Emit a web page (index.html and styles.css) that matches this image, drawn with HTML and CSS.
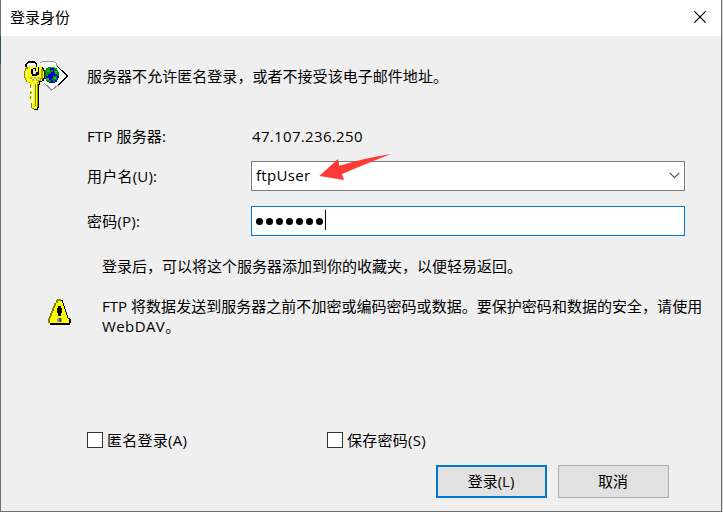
FILE: index.html
```html
<!DOCTYPE html>
<html lang="zh-CN">
<head>
<meta charset="utf-8">
<title>登录身份</title>
<link rel="stylesheet" href="styles.css">
</head>
<body>
<main class="dialog">
  <header class="titlebar">
    <span>登录身份</span>
    <svg class="close" width="12" height="12" viewBox="0 0 12 12"><path d="M.3.3 11.7 11.7M11.7.3.3 11.7" fill="none" stroke="#000" stroke-width="1.15"/></svg>
  </header>
  <section class="intro">
    <svg class="key" width="60" height="60" viewBox="0 0 60 60" shape-rendering="crispEdges">
      <path d="M25 8H39L41 12 51 22 42 31 36 36 28 29Z" fill="#fff"/>
      <path d="M24 8.500H26M26 7.500H38M38 8.500H40M40.500 9V12" fill="none" stroke="#999" stroke-width="1"/>
      <path d="M41.500 12.500 51.500 22 42.500 31" fill="none" stroke="#000" stroke-width="1.100"/>
      <path d="M28.500 29.500 35.500 36 42.500 31" fill="none" stroke="#8c8c8c" stroke-width="1.200"/>
      <path d="M32 13H39V14H41V16H42V18H43V24H42V26H41V28H39V29H33V28H31V27H30V25H29V16H30V14H32Z" fill="#0000e0"/>
      <path d="M32 13H35V14H34V16H37V18H35V20H32V22H30V24H29V16H30V14H32ZM38 13H39V14H41V16H42V18H43V22H41V20H39V18H38ZM37 22H41V26H39V28H37V26H36V24H37ZM30 24H33V26H35V28H31V27H30Z" fill="#009000"/>
      <path d="M35 13H38V14H35ZM39 17H41V20H39ZM31 24H33V26H31ZM38 23H40V25H38ZM31 16H33V18H31Z" fill="#00d020"/>
      <path d="M12 9H19V11H13V14H11V10H12Z" fill="#fff"/>
      <path d="M9 13V10H10V9H11V8H12V7H19V8H20V9H21V13H20V10H19V9H12V10H11V13Z" fill="#000"/>
      <path d="M12 13H26V14H28V16H29V25H28V27H26V28H24V31H23V54H22V55H17V54H15V49H17V46H14V42H16V40H14V35H16V32H14V29H12V28H10V26H9V24H8V17H9V15H10V14H12Z" fill="#ff0"/>
      <path d="M12 13H10V14H9V17H8V24H9V26H10V28H13V29H14V35H15V30H14V28H11V26H10V24H9V17H10V15H12ZM14 38H16V39H15V41H16V42H15V45H14ZM15 49H16V54H18V55H16V54H15Z" fill="#858500"/>
      <path d="M26 13H27V14H28V16H29V25H28V27H26V28H24V31H23V54H22V56H18V55H21V53H22V30H23V27H26V25H27V24H28V17H27V15H26Z" fill="#000"/>
      <path d="M25 15H27V25H25V27H23V29H22V53H21V28H22V26H24V24H25Z" fill="#a5a000"/>
      <path d="M19 30H20V52H19Z" fill="#858500"/>
      <path d="M10 17H11V23H10ZM16 30H17V51H16ZM14 34H16V36H14ZM14 40H16V42H14ZM15 46H17V48H15Z" fill="#fff"/>
      <path d="M16 15H21V20H16Z" fill="#e4e4e4"/>
      <path d="M15 15H17V14H20V17H19V15H17V20H20V18H22V13H23V21H21V22H16V20H15Z" fill="#000"/>
      <path d="M14 23H16V25H14ZM18 23H20V25H18ZM22 23H24V25H22ZM16 25H18V27H16ZM20 25H22V27H20Z" fill="#aaa"/>
    </svg>
    <p>服务器不允许匿名登录，或者不接受该电子邮件地址。</p>
  </section>
  <section class="fields">
    <span class="label">FTP 服务器:</span><span class="address">47.107.236.250</span>
    <span class="label user">用户名(U):</span>
    <div class="input combo"><span>ftpUser</span>
      <svg width="11" height="7" viewBox="0 0 11 7"><path d="m.7.9 4.8 4.7L10.3.9" fill="none" stroke="#444" stroke-width="1.1"/></svg>
      <svg class="arrow" width="74" height="30" viewBox="0 0 74 30"><path d="M1.3 24 20 7 21.3 13.7Q47 6 73 2 50 11 24 22L26 28Z" fill="#ff3b38"/></svg>
    </div>
    <span class="label pass">密码(P):</span>
    <div class="input password"><i></i><i></i><i></i><i></i><i></i><i></i><i></i><b class="caret"></b></div>
  </section>
  <p class="hint">登录后，可以将这个服务器添加到你的收藏夹，以便轻易返回。</p>
  <section class="warning">
    <svg width="24" height="27" viewBox="0 0 24 27" shape-rendering="crispEdges">
      <path d="M10 1H13V3H15V7H16V10H17V13H18V16H19V19H21V24H20V25H2V24H1V19H2V17H3V14H4V12H5V9H6V7H7V4H9V1Z" fill="#ff0"/>
      <path d="M9 0H13V2H10V4H8V7H7V9H6V12H5V14H4V17H3V19H2V24H0V19H1V17H2V14H3V12H4V9H5V7H6V4H8V1H9Z" fill="#858500"/>
      <path d="M13 1H15V4H16V7H17V10H18V13H19V16H20V19H22V20H23V24H22V26H2V24H21V20H20V19H19V16H18V13H17V10H16V7H15V4H14V2H13ZM10 7H13V9H14V14H13V17H10V14H9V9H10Z" fill="#000"/>
      <path d="M9 19H14V23H9Z" fill="#999"/><path d="M11 19H13V23H11Z" fill="#555"/>
    </svg>
    <p><span>FTP 将数据发送到服务器之前不加密或编码密码或数据。要保护密码和数据的安全，请使用</span><br><span class="webdav">WebDAV。</span></p>
  </section>
  <section class="checks">
    <div class="check"><span class="box"></span><span>匿名登录(A)</span></div>
    <div class="check"><span class="box"></span><span>保存密码(S)</span></div>
  </section>
  <footer class="actions">
    <button class="button primary">登录(L)</button>
    <button class="button">取消</button>
  </footer>
</main>
</body>
</html>
```
FILE: styles.css
```css
* { box-sizing: border-box; }
body {
  margin: 0;
  background: #d5d5d5;
  color: #000;
  font: 15px/20px "Open Sans", "Noto Sans CJK SC", sans-serif;
  overflow: hidden;
}
p { margin: 0; white-space: nowrap; }
.dialog {
  width: 722px;
  height: 512px;
  border: solid #707070;
  border-width: 0 1px 1px;
  background: #efefef;
}
.titlebar {
  display: flex;
  align-items: center;
  justify-content: space-between;
  height: 36px;
  padding: 0 15px 2px 9px;
  background: #fff;
}
.intro {
  position: relative;
  display: flex;
  gap: 11px;
  height: 78px;
  padding: 18px 0 0 15px;
}
.intro::before {
  content: "";
  position: absolute;
  left: -1px;
  top: 0;
  width: 1px;
  height: 28px;
  background: #1c555c;
}
.intro p { padding-top: 12px; letter-spacing: .04px; }
.fields {
  display: grid;
  grid-template-columns: 164px 434px;
  grid-template-rows: 32px 30px 30px;
  row-gap: 15px;
  margin-left: 86px;
}
.fields > span { padding-top: 12px; }
.fields > .label { letter-spacing: .15px; }
.fields > .user, .fields > .pass { padding-top: 5px; letter-spacing: .22px; }
.address { padding-left: 1px; letter-spacing: .33px; }
.input {
  display: flex;
  align-items: center;
  background: #fff;
  border: 1px solid #7a7a7a;
}
.combo {
  position: relative;
  justify-content: space-between;
  padding: 0 4px 2px;
}
.combo > span { letter-spacing: .3px; }
.arrow { position: absolute; left: 66px; top: -10px; }
.password { border-color: #0078d7; padding-left: 4px; gap: 3px; }
.password i { width: 7px; height: 7px; border-radius: 50%; background: #000; }
.caret { width: 1px; height: 20px; margin: -3px 0 0 -1px; background: #000; }
.hint { margin: 20px 0 0 101px; }
.warning {
  display: flex;
  gap: 30px;
  height: 54px;
  margin: 20px 0 0 47px;
  letter-spacing: .03px;
}
.warning svg { margin-top: 3px; }
.webdav { letter-spacing: .4px; }
.checks { display: flex; height: 20px; margin: 80px 0 0 86px; }
.check { display: flex; align-items: center; gap: 4px; width: 240px; letter-spacing: .25px; }
.box { width: 16px; height: 16px; background: #fff; border: 1px solid #333; }
.actions { display: flex; gap: 11px; margin: 15px 0 0 435px; }
.button {
  width: 111px;
  height: 33px;
  padding: 0 1px 2px 0;
  font: inherit;
  color: inherit;
  background: #e1e1e1;
  border: 1px solid #adadad;
}
.primary { border: 2px solid #0078d7; }
```
